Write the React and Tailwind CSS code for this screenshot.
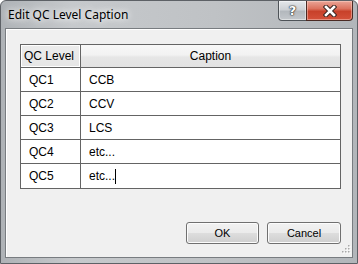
import React from 'react';

const ROWS = [
  { level: 'QC1', caption: 'CCB' },
  { level: 'QC2', caption: 'CCV' },
  { level: 'QC3', caption: 'LCS' },
  { level: 'QC4', caption: 'etc...' },
  { level: 'QC5', caption: 'etc...', editing: true },
];

const sans = { fontFamily: '"Liberation Sans", Arial, sans-serif' };

function CaptionButtons() {
  return (
    <div className="flex self-start mt-0 mr-[4px]">
      {/* help */}
      <div className="w-[28px] h-[20px] flex items-center justify-center rounded-bl-[4px] border border-t-0 border-r-0 border-[#4e5358] bg-[linear-gradient(#e4e7ea,#cdd1d5_45%,#b3b8bd_55%,#c3c7cb)] shadow-[inset_0_0_0_1px_rgba(255,255,255,0.45)]">
        <span
          className="text-[13px] font-bold leading-none text-white [text-shadow:0_0_1px_#222,0_0_1px_#222,0_0_2px_#333]"
          style={{ fontFamily: '"DejaVu Sans", sans-serif' }}
        >
          ?
        </span>
      </div>
      {/* close */}
      <div className="w-[47px] h-[20px] flex items-center justify-center rounded-br-[4px] border border-t-0 border-[#4a2a24] bg-[linear-gradient(#eaa597,#dc735f_40%,#c8412a_55%,#d4513a)] shadow-[inset_0_0_0_1px_rgba(255,220,210,0.45)]">
        <svg width="14" height="12" viewBox="0 0 14 12">
          <path d="M3 2 L11 10 M11 2 L3 10" stroke="#3b2622" strokeWidth="4.6" strokeLinecap="square" />
          <path d="M3 2 L11 10 M11 2 L3 10" stroke="#ffffff" strokeWidth="2.6" strokeLinecap="square" />
        </svg>
      </div>
    </div>
  );
}

function Grip() {
  const dots = [
    [7, 1],
    [4, 4], [7, 4],
    [1, 7], [4, 7], [7, 7],
  ];
  return (
    <svg width="10" height="10" viewBox="0 0 10 10" className="absolute right-[1px] bottom-[3px]">
      {dots.map(([x, y], i) => (
        <g key={i}>
          <rect x={x + 1} y={y + 1} width="1.5" height="1.5" fill="#ffffff" />
          <rect x={x} y={y} width="1.5" height="1.5" fill="#a9a9a9" />
        </g>
      ))}
    </svg>
  );
}

function WinButton({ children, className = '' }) {
  return (
    <button
      className={`h-[22px] rounded-[3px] border border-[#707070] bg-[linear-gradient(#f2f2f2,#ebebeb_48%,#dddddd_52%,#cfcfcf)] shadow-[inset_0_0_0_1px_#fcfcfc] text-[11px] text-black flex items-center justify-center ${className}`}
      style={sans}
    >
      {children}
    </button>
  );
}

export default function App() {
  return (
    <div className="w-[358px] h-[264px] flex flex-col rounded-t-[6px] border border-[#5d6166] bg-[linear-gradient(90deg,#aeb2b6,#c6c9cc_20%,#bfc2c5_60%,#b2b6ba)] overflow-hidden">
      {/* title bar */}
      <div className="h-[27px] flex">
        <div
          className="pl-[7px] pt-[5px] text-[12px] text-black [text-shadow:0_0_6px_#fff,0_0_10px_#fff]"
          style={{ fontFamily: '"Noto Sans", "Open Sans", sans-serif' }}
        >
          Edit QC Level Caption
        </div>
        <div className="ml-auto flex">
          <CaptionButtons />
        </div>
      </div>

      {/* client area */}
      <div className="relative ml-[4px] w-[348px] h-[230px] border border-[#787c80] bg-[#f0f0f0] shadow-[inset_1px_1px_0_#ffffff] flex flex-col">
        {/* grid */}
        <div className="ml-[14px] mt-[15px] w-[321px] border border-[#646464] bg-white flex flex-col" style={sans}>
          <div className="h-[23px] flex border-b border-[#646464]">
            <div className="w-[60px] border-r border-[#646464] flex">
              <div className="flex-1 border border-white bg-[linear-gradient(#ececec,#e6e6e6)] flex items-center pl-[2px] text-[12px] text-black">
                QC Level
              </div>
            </div>
            <div className="flex-1 flex items-center justify-center text-[12px] text-black bg-[linear-gradient(#f8f8f8,#f2f2f2_45%,#e6e6e6_55%,#e2e2e2)]">
              Caption
            </div>
          </div>
          {ROWS.map((r, i) => (
            <div
              key={r.level}
              className={`h-[24px] flex ${i < ROWS.length - 1 ? 'border-b border-[#646464]' : ''}`}
            >
              <div className="w-[60px] border-r border-[#646464] flex items-center pl-[8px] text-[12px] text-black">
                {r.level}
              </div>
              <div className="flex-1 flex items-center pl-[8px] text-[12px] text-black">
                {r.caption}
                {r.editing && <span className="inline-block w-px h-[15px] bg-black" />}
              </div>
            </div>
          ))}
        </div>

        {/* buttons */}
        <div className="mt-[33px] flex justify-end gap-[8px] pr-[11px]">
          <WinButton className="w-[73px]">OK</WinButton>
          <WinButton className="w-[74px]">Cancel</WinButton>
        </div>

        <Grip />
      </div>
    </div>
  );
}
